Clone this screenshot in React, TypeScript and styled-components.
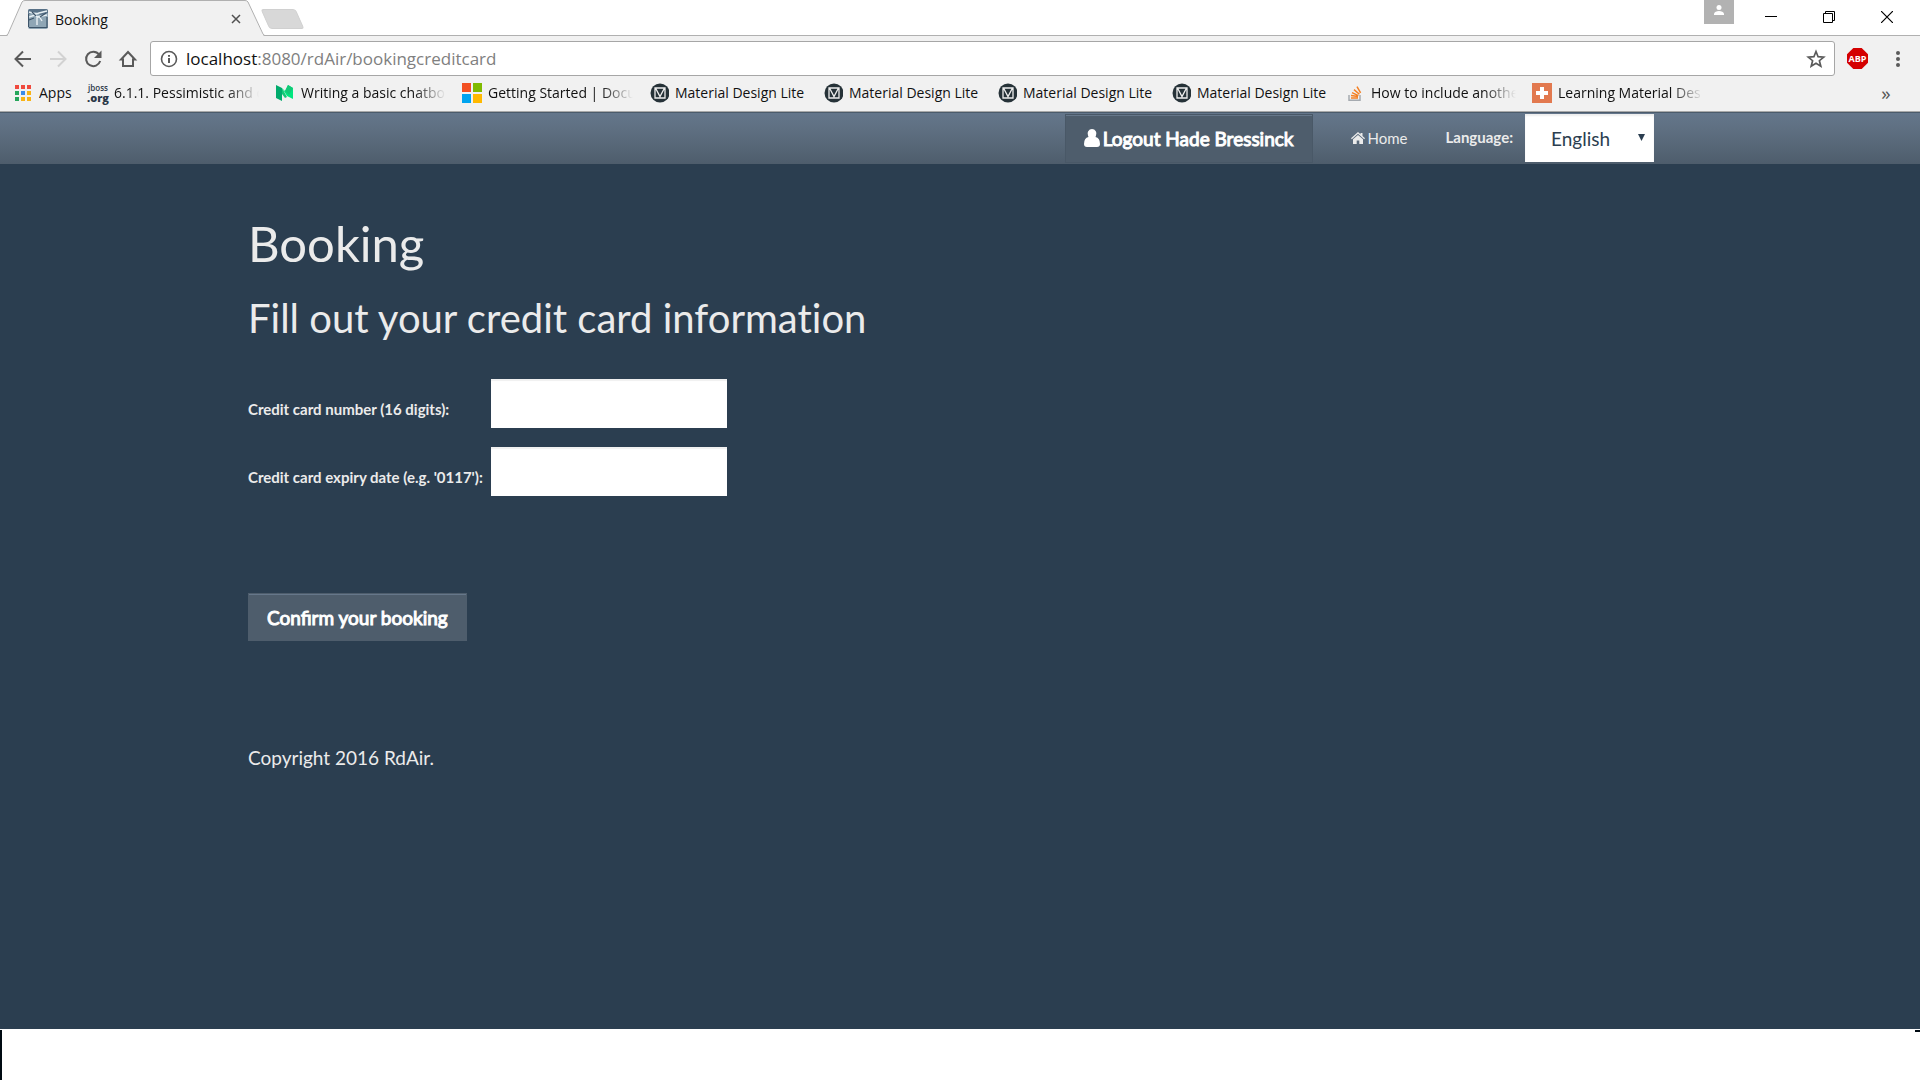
import React from "react";
import styled, { createGlobalStyle } from "styled-components";

const GlobalStyle = createGlobalStyle`
  *, *::before, *::after { box-sizing: border-box; }
  body { margin: 0; background: #fff; font-family: Lato, "Liberation Sans", sans-serif; }
  button, input, select { font-family: inherit; margin: 0; }
  h1, h2, p { margin: 0; font-weight: 400; }
  svg { display: block; flex: none; }
`;

const Shell = styled.div`
  display: flex;
  flex-direction: column;
  min-height: 100vh;
`;

/* Browser window */

const Browser = styled.header`
  background: #f1f1f1;
  color: #111;
  border-bottom: 1px solid #a9a9a9;
  font-family: "Open Sans", "Noto Sans", sans-serif;
  font-size: 14px;
`;

const TabStrip = styled.div`
  display: flex;
  align-items: flex-start;
  height: 36px;
  background: #fff;
  border-bottom: 1px solid #b0b0b0;
`;

const Tab = styled.div`
  position: relative;
  display: flex;
  align-items: center;
  gap: 7px;
  width: 264px;
  height: 36px;
  padding: 2px 20px 0 28px;
  font-size: 14px;
  > span { flex: 1; }
  > * { position: relative; }
`;

const TabShape = styled.svg`
  && { position: absolute; left: 0; top: 0; }
`;

const IconButton = styled.button<{ $w?: number }>`
  display: flex;
  align-items: center;
  justify-content: center;
  flex: none;
  width: ${(p) => p.$w ?? 20}px;
  height: 20px;
  padding: 0;
  border: 0;
  background: none;
  color: #555;
  font-size: 19px;
`;

const NewTab = styled.button`
  width: 35px;
  height: 20px;
  margin: 9px 0 0 1px;
  padding: 0;
  border: 1px solid #d0d0d0;
  border-radius: 3px;
  background: #d8d8d8;
  transform: skewX(24deg);
`;

const WindowButtons = styled.div`
  display: flex;
  align-items: flex-start;
  margin-left: auto;
  height: 35px;
  padding-right: 4px;
`;

const Profile = styled.button`
  display: flex;
  justify-content: center;
  width: 30px;
  height: 24px;
  margin-right: 8px;
  padding: 5px 0 0;
  border: 0;
  background: #b2b2b2;
`;

const WindowButton = styled.button`
  display: flex;
  align-items: center;
  justify-content: center;
  width: 58px;
  height: 34px;
  padding: 0;
  border: 0;
  background: none;
`;

const Toolbar = styled.div`
  display: flex;
  align-items: center;
  gap: 12px;
  height: 40px;
  padding: 5px 12px 0 13px;
`;

const Navigation = styled.div`
  display: flex;
  gap: 15px;
`;

const Omnibox = styled.div`
  display: flex;
  flex: 1;
  align-items: center;
  gap: 7px;
  height: 35px;
  padding: 0 8px;
  border: 1px solid #a6a6a6;
  border-radius: 3px;
  background: #fff;
`;

const Address = styled.a`
  flex: 1;
  color: #808080;
  font-size: 17px;
  text-decoration: none;
  b { color: #111; font-weight: 400; }
`;

const AdBlock = styled.button`
  width: 21px;
  height: 21px;
  margin-right: 8px;
  padding: 0;
  border: 0;
  background: #d40000;
  color: #fff;
  font: 700 9px/21px "Open Sans", sans-serif;
  clip-path: polygon(30% 0, 70% 0, 100% 30%, 100% 70%, 70% 100%, 30% 100%, 0 70%, 0 30%);
`;

const Bookmarks = styled.nav`
  display: flex;
  align-items: center;
  gap: 16px;
  height: 35px;
  padding: 0 23px 2px 13px;
  button { margin-left: auto; }
`;

const Bookmark = styled.a`
  display: flex;
  align-items: center;
  gap: 6px;
  color: #111;
  text-decoration: none;
`;

const BookmarkText = styled.span<{ $w: number; $fade?: boolean }>`
  width: ${(p) => p.$w}px;
  overflow: hidden;
  white-space: nowrap;
  ${(p) => p.$fade && "mask-image: linear-gradient(to right, #000 calc(100% - 32px), transparent);"}
`;

const JBoss = styled.span`
  display: flex;
  flex-direction: column;
  align-items: center;
  width: 20px;
  color: #2b3848;
  font: 600 8px/9px "Open Sans", sans-serif;
  b { font-size: 11px; line-height: 11px; }
`;

/* Web page */

const Page = styled.div`
  flex: 1;
  background: #2b3e50;
  color: #ebebeb;
  font-size: 19px;
`;

const Navbar = styled.nav`
  height: 52px;
  border-top: 1px solid #4b5b6b;
  background: linear-gradient(#64768b, #5f7082 30%, #4e5d6c);
`;

const Container = styled.div`
  max-width: 1424px;
  margin: 0 auto;
`;

const NavItems = styled(Container)`
  display: flex;
  align-items: center;
  justify-content: flex-end;
  height: 50px;
  padding-right: 18px;
  > label { padding-bottom: 3px; }
`;

const SolidButton = styled.button<{ $nav?: boolean }>`
  display: inline-flex;
  align-items: center;
  justify-content: center;
  gap: 3px;
  height: ${(p) => (p.$nav ? 49 : 48)}px;
  padding: 0 18px;
  border: 1px solid ${(p) => (p.$nav ? "#495867" : "#4e5d6c")};
  background: #4e5d6c;
  box-shadow: inset 0 1px 0 #66778a;
  color: #fff;
  font-size: 19px;
  -webkit-text-stroke: 1px #fff;
  svg { stroke: none; }
`;

const HomeLink = styled.a`
  display: flex;
  align-items: center;
  gap: 3px;
  margin: 0 38px;
  color: #ebebeb;
  font-size: 15px;
  text-decoration: none;
`;

const Label = styled.label`
  font-size: 15px;
  font-weight: 700;
`;

const SelectBox = styled.div`
  position: relative;
  margin-left: 12px;
  svg { position: absolute; right: 9px; top: 20px; pointer-events: none; }
`;

const Select = styled.select`
  display: block;
  width: 129px;
  height: 48px;
  padding: 0 26px;
  border: 0;
  border-radius: 0;
  background: #fff;
  box-shadow: inset 0 2px 2px #eee;
  color: #2b3e50;
  font-size: 19px;
  appearance: none;
`;

const Content = styled(Container).attrs({ as: "main" })`
  padding-top: 51px;
`;

const Title = styled.h1`
  font-size: 49px;
  line-height: 56px;
`;

const Subtitle = styled.h2`
  margin-top: 25px;
  font-size: 40px;
  line-height: 44px;
  font-variant-ligatures: none;
`;

const Fields = styled.div`
  display: grid;
  grid-template-columns: 236px 236px;
  column-gap: 7px;
  row-gap: 19px;
  margin: 39px 0 97px;
  ${Label} {
    padding-top: 21px;
    line-height: 18px;
    white-space: nowrap;
  }
`;

const Field = styled.input`
  width: 236px;
  height: 49px;
  padding: 0 16px;
  border: 0;
  background: #fff;
  box-shadow: inset 0 2px 1px #f0f0f0;
  color: #2b3e50;
  font-size: 19px;
`;

const Footer = styled.footer`
  margin-top: 104px;
  line-height: 26px;
`;

const BottomStrip = styled.div`
  position: relative;
  height: 51px;
  background: #fff;
  &::before, &::after { content: ""; position: absolute; top: 1px; background: #000a12; }
  &::before { left: 0; bottom: 0; width: 2px; }
  &::after { right: 0; width: 5px; height: 2px; }
`;

const Favicon = () => (
  <svg width="20" height="20" viewBox="0 0 20 20">
    <rect width="20" height="20" rx="2" fill="#8fa6b5" />
    <path d="M0 2Q0 0 2 0H18Q20 0 20 2V4L12 6 8 3 0 5Z" fill="#587187" />
    <path d="M1 3 8 5 11 4 19 2M1 8 7 6 9 8 19 6M9 7V16M11 7 14 12" stroke="#e8f0f4" strokeWidth="1.4" fill="none" />
    <path d="M1 11 6 9M4 3 8 7M12 8 18 4M1 18.500H19M19 8V19M.5 5V18" stroke="#3d5469" strokeWidth="1.2" fill="none" />
  </svg>
);

const AppsIcon = () => (
  <svg width="20" height="20" viewBox="0 0 20 20">
    {["#f04a3e", "#f04a3e", "#f04a3e", "#26a65b", "#3b8beb", "#f9b315", "#26a65b", "#f9b315", "#f9b315"].map((c, i) => (
      <rect key={i} x={2 + (i % 3) * 6} y={2 + Math.floor(i / 3) * 6} width="4" height="4" fill={c} />
    ))}
  </svg>
);

const MediumIcon = () => (
  <svg width="20" height="20" viewBox="0 0 20 20">
    <path d="M1 2 7 5V18L1 15Z" fill="#00ab6c" />
    <path d="M7 5 12 13 18 16V5L13 2 10 8Z" fill="#00e77f" />
    <path d="M7 5 12 14 10 15 7 11ZM13 2 18 5 14 12 10 8Z" fill="#12c977" />
  </svg>
);

const WindowsIcon = () => (
  <svg width="20" height="20" viewBox="0 0 20 20">
    <path d="M0 0H9V9H0Z" fill="#f25022" />
    <path d="M11 0H20V9H11Z" fill="#7fba00" />
    <path d="M0 11H9V20H0Z" fill="#00a4ef" />
    <path d="M11 11H20V20H11Z" fill="#ffb900" />
  </svg>
);

const MdlIcon = () => (
  <svg width="20" height="20" viewBox="0 0 20 20">
    <circle cx="11" cy="10" r="9.5" fill="#263238" />
    <path d="M6 5H16V15H6ZM6.500 5 11 13.500 15.500 5" fill="none" stroke="#eee" strokeWidth="1.3" />
  </svg>
);

const StackIcon = () => (
  <svg width="20" height="20" viewBox="0 0 20 20">
    <path d="M4 12V17.2H15V12" fill="none" stroke="#a5aab0" strokeWidth="1.5" />
    <path d="M6 15H13M6 12.4 13 13.6M7 9.6 13.4 12.6M9 6.6 14.4 11.2M12 3.6 15.6 9.8" stroke="#f48024" strokeWidth="1.5" />
  </svg>
);

const PlusIcon = () => (
  <svg width="20" height="20" viewBox="0 0 20 20">
    <rect width="20" height="20" fill="#e2794f" />
    <path d="M8 4H12V8H16V12H12V16H8V12H4V8H8Z" fill="#fff" />
  </svg>
);

const JBossIcon = () => (
  <JBoss>
    jboss<b>.org</b>
  </JBoss>
);

const bookmarks: { text: string; icon: () => React.JSX.Element; width: number; fade?: boolean }[] = [
  { text: "Apps", icon: AppsIcon, width: 33 },
  { text: "6.1.1. Pessimistic and o", icon: JBossIcon, width: 145, fade: true },
  { text: "Writing a basic chatbo", icon: MediumIcon, width: 145, fade: true },
  { text: "Getting Started | Docu", icon: WindowsIcon, width: 145, fade: true },
  { text: "Material Design Lite", icon: MdlIcon, width: 132 },
  { text: "Material Design Lite", icon: MdlIcon, width: 132 },
  { text: "Material Design Lite", icon: MdlIcon, width: 132 },
  { text: "Material Design Lite", icon: MdlIcon, width: 132 },
  { text: "How to include anothe", icon: StackIcon, width: 145, fade: true },
  { text: "Learning Material Des", icon: PlusIcon, width: 145, fade: true },
];

const BrowserChrome = () => (
  <Browser>
    <TabStrip>
      <Tab>
        <TabShape width="265" height="36" viewBox="0 0 265 36">
          <path d="M7 36 8 35 22 2Q23 .5 25 .5H245Q247 .5 248 2L263 35 264 36Z" fill="#f1f1f1" />
          <path d="M0 35.5H6Q7 35.5 8 34L22 2Q23 .5 25 .5H245Q247 .5 248 2L263 34Q264 35.5 265 35.5" fill="none" stroke="#b0b0b0" />
        </TabShape>
        <Favicon />
        <span>Booking</span>
        <IconButton aria-label="Close tab" $w={16}>
          <svg width="10" height="10" viewBox="0 0 10 10">
            <path d="M1 1 9 9M9 1 1 9" stroke="#505050" strokeWidth="1.5" />
          </svg>
        </IconButton>
      </Tab>
      <NewTab aria-label="New tab" />
      <WindowButtons>
        <Profile aria-label="Profile">
          <svg width="10" height="11" viewBox="0 0 10 11">
            <circle cx="5" cy="2.5" r="2.5" fill="#fff" />
            <path d="M0 10V8.5Q1 6 5 6T10 8.500V10Z" fill="#fff" />
          </svg>
        </Profile>
        <WindowButton aria-label="Minimize">
          <svg width="12" height="12"><path d="M0 5.500H12" stroke="#000" /></svg>
        </WindowButton>
        <WindowButton aria-label="Restore">
          <svg width="12" height="12"><path d="M.5 2.500H9.500V11.500H.5ZM2.500 2.500V.5H11.500V9.500H9.500" fill="none" stroke="#000" /></svg>
        </WindowButton>
        <WindowButton aria-label="Close">
          <svg width="12" height="12"><path d="M0 0 12 12M12 0 0 12" stroke="#000" strokeWidth="1.200" /></svg>
        </WindowButton>
      </WindowButtons>
    </TabStrip>
    <Toolbar>
      <Navigation>
        <IconButton aria-label="Back">
          <svg width="20" height="20" viewBox="0 0 20 20"><path d="M18 10H3M10 2.500 2.500 10 10 17.500" fill="none" stroke="#5a5a5a" strokeWidth="2" /></svg>
        </IconButton>
        <IconButton aria-label="Forward">
          <svg width="20" height="20" viewBox="0 0 20 20"><path d="M2 10H17M10 2.500 17.500 10 10 17.500" fill="none" stroke="#d2d2d2" strokeWidth="2" /></svg>
        </IconButton>
        <IconButton aria-label="Reload">
          <svg width="20" height="20" viewBox="0 0 20 20">
            <path d="M16 5.500A7.200 7.200 0 1 0 17.200 12" fill="none" stroke="#5a5a5a" strokeWidth="2" />
            <path d="M18.500 1.500V9H11Z" fill="#5a5a5a" />
          </svg>
        </IconButton>
        <IconButton aria-label="Home page">
          <svg width="20" height="20" viewBox="0 0 20 20"><path d="M10 3 17 10.500H15V17H5V10.500H3Z" fill="none" stroke="#5a5a5a" strokeWidth="2" /></svg>
        </IconButton>
      </Navigation>
      <Omnibox>
        <IconButton aria-label="Site information">
          <svg width="18" height="18" viewBox="0 0 18 18">
            <circle cx="9" cy="9" r="7.500" fill="none" stroke="#5a5a5a" strokeWidth="1.600" />
            <path d="M9 8V13M9 5V6.800" stroke="#5a5a5a" strokeWidth="2" />
          </svg>
        </IconButton>
        <Address href="#"><b>localhost</b>:8080/rdAir/bookingcreditcard</Address>
        <IconButton aria-label="Bookmark this page">
          <svg width="20" height="20" viewBox="0 0 20 20">
            <path d="M10 2.500 12.100 7.700 17.700 8.100 13.400 11.700 14.800 17.200 10 14.200 5.200 17.200 6.600 11.700 2.300 8.100 7.900 7.700Z" fill="none" stroke="#5a5a5a" strokeWidth="1.700" />
          </svg>
        </IconButton>
      </Omnibox>
      <AdBlock>ABP</AdBlock>
      <IconButton aria-label="Menu">
        <svg width="4" height="18" viewBox="0 0 4 18" fill="#5a5a5a"><circle cx="2" cy="3" r="2" /><circle cx="2" cy="9" r="2" /><circle cx="2" cy="15" r="2" /></svg>
      </IconButton>
    </Toolbar>
    <Bookmarks>
      {bookmarks.map(({ text, icon: Icon, width, fade }, i) => (
        <Bookmark href="#" key={i}>
          <Icon />
          <BookmarkText $w={width} $fade={fade}>{text}</BookmarkText>
        </Bookmark>
      ))}
      <IconButton $w={22}>»</IconButton>
    </Bookmarks>
  </Browser>
);

export default function App() {
  return (
    <Shell>
      <GlobalStyle />
      <BrowserChrome />
      <Page>
        <Navbar>
          <NavItems>
            <SolidButton $nav>
              <svg width="16" height="18" viewBox="0 0 16 18" fill="#fff">
                <path d="M8 0A4.500 4.500 0 0 1 12 6.500L11.500 8Q16 9 16 15 16 18 13 18H3Q0 18 0 15 0 9 4.500 8L4 6.500A4.500 4.500 0 0 1 8 0Z" />
              </svg>
              Logout Hade Bressinck
            </SolidButton>
            <HomeLink href="#">
              <svg width="14" height="12" viewBox="0 0 14 12" fill="#ebebeb">
                <path d="M7 0 9.500 2.300V1H11.500V4L14 6.300 13.200 7.200 7 1.800.8 7.200 0 6.300Z" />
                <path d="M7 3 12 7.300V12H8.300V8.500H5.700V12H2V7.300Z" />
              </svg>
              Home
            </HomeLink>
            <Label htmlFor="language">Language:</Label>
            <SelectBox>
              <Select id="language" defaultValue="English">
                <option>English</option>
              </Select>
              <svg width="7" height="7" viewBox="0 0 7 7"><path d="M0 0H7L3.500 7Z" fill="#2b3e50" /></svg>
            </SelectBox>
          </NavItems>
        </Navbar>
        <Content>
          <Title>Booking</Title>
          <Subtitle>Fill out your credit card information</Subtitle>
          <form onSubmit={(e) => e.preventDefault()}>
            <Fields>
              <Label htmlFor="number">Credit card number (16 digits):</Label>
              <Field id="number" type="text" />
              <Label htmlFor="expiry">Credit card expiry date (e.g. '0117'):</Label>
              <Field id="expiry" type="text" />
            </Fields>
            <SolidButton type="submit">Confirm your booking</SolidButton>
          </form>
          <Footer>Copyright 2016 RdAir.</Footer>
        </Content>
      </Page>
      <BottomStrip />
    </Shell>
  );
}
